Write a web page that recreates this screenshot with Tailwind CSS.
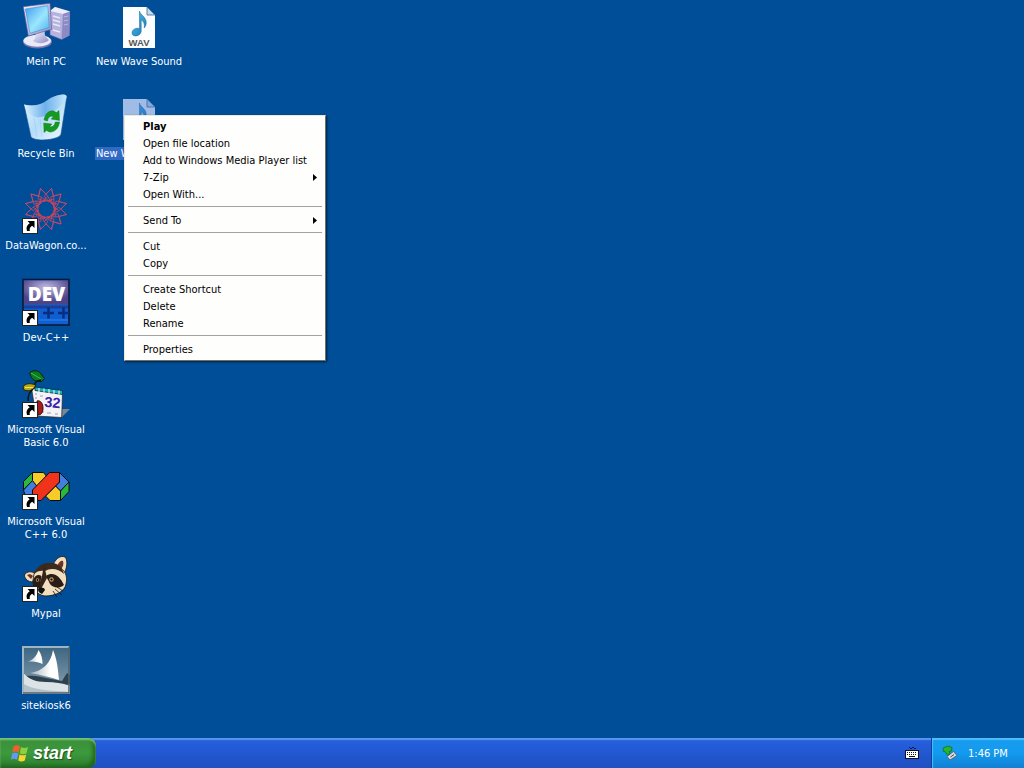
<!DOCTYPE html>
<html lang="en">
<head>
<meta charset="utf-8">
<meta name="viewport" content="width=device-width, initial-scale=1">
<title>Desktop</title>
<script src="https://cdn.jsdelivr.net/npm/@tailwindcss/browser@4"></script>
</head>
<body class="relative flex h-screen flex-col overflow-hidden bg-[#004e98] font-['DejaVu_Sans_Condensed','Noto_Sans',sans-serif] text-[11px] leading-[13px]">

<svg class="absolute size-0" aria-hidden="true">
  <defs>
    <linearGradient id="screen" x1="0" y1="0" x2="1" y2="1"><stop offset="0" stop-color="#3f9cf0"/><stop offset=".55" stop-color="#9ce6fc"/><stop offset="1" stop-color="#4ab0f0"/></linearGradient>
    <linearGradient id="case" x1="0" y1="0" x2="1" y2="1"><stop offset="0" stop-color="#f4f4fc"/><stop offset="1" stop-color="#8c8cc4"/></linearGradient>
    <linearGradient id="bin" x1="0" y1="0" x2="1" y2="1"><stop offset="0" stop-color="#e4f6fe"/><stop offset=".5" stop-color="#b4dcf8"/><stop offset="1" stop-color="#f2fbff"/></linearGradient>
    <linearGradient id="rim" x1="0" y1="0" x2="1" y2="0"><stop offset="0" stop-color="#d8f2ff"/><stop offset=".5" stop-color="#6fb0ec"/><stop offset="1" stop-color="#c4e8fc"/></linearGradient>
    <radialGradient id="dev" cx=".5" cy=".3" r=".6"><stop offset="0" stop-color="#c4bce4"/><stop offset="1" stop-color="#4c4488"/></radialGradient>
    <linearGradient id="note" x1="0" y1="0" x2="1" y2="1"><stop offset="0" stop-color="#55c0ee"/><stop offset="1" stop-color="#1479b8"/></linearGradient>
    <linearGradient id="sea" x1="0" y1="0" x2="0" y2="1"><stop offset="0" stop-color="#3c6480"/><stop offset="1" stop-color="#8ca4b4"/></linearGradient>
    <linearGradient id="sail" x1="0" y1="0" x2="1" y2="0"><stop offset="0" stop-color="#aab4bc"/><stop offset=".7" stop-color="#ffffff"/></linearGradient>
    <symbol id="shortcut" viewBox="0 0 16 16">
      <rect x=".5" y=".5" width="15" height="15" fill="#fff" stroke="#222"/>
      <path d="M5.500 3h7v7l-2.300-2.300C8 9 7.300 10.500 7.800 13H5C3.800 9.500 5 7 7.700 5.300z" fill="#000"/>
    </symbol>
    <symbol id="wav" viewBox="0 0 48 48">
      <path d="M8 5h24l8 8v33H8z" fill="#fcfeff"/>
      <path d="M32 5v8h8z" fill="#c4dcec" stroke="#3c6890" stroke-width=".8"/>
      <path d="M24.500 9c.8 4.500 7.300 5.500 6.700 12.500-.2 2-1.200 3.500-2 4.500.8-4-.6-7-3-8v11c0 5.300-9.200 7-9.200 2 0-3.600 4-5.400 7.500-4.500z" fill="url(#note)" stroke="#17648f" stroke-width=".5"/>
      <text x="24" y="44" text-anchor="middle" font-family="Liberation Sans" font-weight="bold" font-size="9.500" fill="#555">WAV</text>
    </symbol>
  </defs>
</svg>

<main class="flex min-h-0 flex-1 items-start gap-px">
  <section class="flex w-[92px] flex-col text-white" aria-label="Programs">
    <button class="flex h-[92px] flex-col items-center gap-[5px] pt-0.5">
      <svg class="size-12 shrink-0" viewBox="0 0 48 48">
        <path d="M28 9l5-4 15 4.500-.7 24-7.800 4L28 33z" fill="#b6b4de" stroke="#5357a2" stroke-width=".6"/>
        <path d="M28 9l5-4 15 4.500-7 2.500z" fill="#ececfb"/>
        <path d="M41 12l7-2.500-.7 24-7.800 4z" fill="#8b8ac4"/>
        <path d="M31 14l7 2M31 18l7 2M31 22l7 2M31 28l7 2" stroke="#e8e8fa" stroke-width="1.500"/>
        <path d="M42 15l4-1M42 19l4-1M42 23l4-1" stroke="#bbb9e2"/>
        <ellipse cx="15.500" cy="39.800" rx="14.500" ry="6.700" fill="#7675ae"/>
        <ellipse cx="15.200" cy="38.800" rx="13.800" ry="6" fill="#e9e9f7"/>
        <path d="M13 31l10-2c-1 4 1 6 4 9-4 4-12 4-16 1 3-3 3-5 2-8z" fill="url(#case)"/>
        <path d="M1.300 4.700L28 1.300l1.700 26L6.300 34z" fill="url(#case)" stroke="#55579c" stroke-width=".6"/>
        <path d="M3.300 7l22.500-3.300 1.500 21.700L8 31.300z" fill="url(#screen)" stroke="#3d7fc4" stroke-width=".5"/>
      </svg>
      <span class="px-px">Mein PC</span>
    </button>
    <button class="flex h-[92px] flex-col items-center gap-[5px] pt-0.5">
      <svg class="size-12 shrink-0" viewBox="0 0 48 48">
        <path d="M2 10.500C8 12 16 12 22 8.500 28 4 34 1 41.500.5c2 0 3.500 1 3.200 3L39 40c-.8 5.500-25 8.500-30 3z" fill="url(#bin)" stroke="#16548f" stroke-width=".6"/>
        <path d="M2 10.500C8 12 16 12 22 8.500 28 4 34 1 41.500.5c2 0 3.500 1 3 3C42 9 36 15 29 19c-7 4-14 6-18 3-4-2-7-6-8-9z" fill="url(#rim)"/>
        <path d="M12 24l3 19M18 25l2 18" stroke="#8fc6f0" opacity=".4"/>
        <g fill="#149b1f" stroke="#087010" stroke-width=".4">
          <path d="M22 26c1-6 5-10 9.500-9l3 1.500 2.500-2 .5 10-8.500-1.500 2.500-2.300c-4-1.700-5.500 1.300-6 4.300z"/>
          <path d="M37.500 28c-.5 6-5 10.500-10 10l-3-1.500-2.500 2-.3-9.500 8.300 1-2.300 2.500c3.500 1 5-1.500 5.600-4.500z"/>
        </g>
      </svg>
      <span class="px-px">Recycle Bin</span>
    </button>
    <button class="flex h-[92px] flex-col items-center gap-[5px] pt-0.5">
      <svg class="size-12 shrink-0" viewBox="0 0 48 48">
        <g fill="none" stroke="#c2486a" stroke-width=".8" transform="translate(24 23)">
          <path id="dwSpoke" d="M-5.500-20.500L0-15l5.500-5.500L8-10 0-8l-8-2zM-5-12L3-7"/>
          <use href="#dwSpoke" transform="rotate(30)"/>
          <use href="#dwSpoke" transform="rotate(60)"/>
          <use href="#dwSpoke" transform="rotate(90)"/>
          <use href="#dwSpoke" transform="rotate(120)"/>
          <use href="#dwSpoke" transform="rotate(150)"/>
          <use href="#dwSpoke" transform="rotate(180)"/>
          <use href="#dwSpoke" transform="rotate(210)"/>
          <use href="#dwSpoke" transform="rotate(240)"/>
          <use href="#dwSpoke" transform="rotate(270)"/>
          <use href="#dwSpoke" transform="rotate(300)"/>
          <use href="#dwSpoke" transform="rotate(330)"/>
        </g>
        <circle cx="24" cy="23" r="9" fill="none" stroke="#dc3c44" stroke-width="2" stroke-dasharray="2 3"/>
        <use href="#shortcut" x="0" y="32" width="16" height="16"/>
      </svg>
      <span class="px-px">DataWagon.co...</span>
    </button>
    <button class="flex h-[92px] flex-col items-center gap-[5px] pt-0.5">
      <svg class="size-12 shrink-0" viewBox="0 0 48 48">
        <rect x="1" y="1.500" width="46" height="45.500" fill="#0f5fd0" stroke="#101838" stroke-width="1.600"/>
        <rect x="2" y="2.500" width="44" height="24" fill="url(#dev)"/>
        <path d="M2 29h44" stroke="#1c3f98" stroke-width="3"/>
        <text x="24.500" y="22.500" text-anchor="middle" font-family="Open Sans" font-weight="800" font-size="19" fill="#fff">DEV</text>
        <path d="M21 35h11M26.500 29.500v11M36 35h11M41.500 29.500v11" stroke="#0a2d80" stroke-width="2.500"/>
        <path d="M17 42h29" stroke="#2a86f0"/>
        <use href="#shortcut" x="0" y="32" width="16" height="16"/>
      </svg>
      <span class="px-px">Dev-C++</span>
    </button>
    <button class="flex h-[92px] flex-col items-center gap-[5px] pt-0.5">
      <svg class="size-12 shrink-0" viewBox="0 0 48 48">
        <path d="M40 39h8l-8 8z" fill="#7c868c"/>
        <path d="M9.500 18l31 4.500-.8 25L14 46z" fill="#f4f4f8" stroke="#222" stroke-width=".7"/>
        <path d="M13 17l27.500 3.500v4L13 20.500z" fill="#18b4bc" stroke="#052c3c" stroke-width=".8"/>
        <path d="M17 18v4M22 18.500v4M27 19v4M32 20v4M37 20.500v4" stroke="#fff"/>
        <path d="M13 28h2M18 26h3M19 42h3M25 43h4M33 44h3M13 24h2" stroke="#b8bcc8" stroke-width="1.500"/>
        <text x="30.500" y="37.500" text-anchor="middle" font-family="Liberation Sans" font-weight="bold" font-size="14.500" fill="#3c20a8" transform="rotate(5 30 33)">32</text>
        <path d="M7.500 3C11-.5 17 0 19.500 4.500l3 4-3 3c-4 .5-9-1-10.500-5z" fill="#0d7a24" stroke="#082408"/>
        <path d="M9 3l10 6" stroke="#40c048"/>
        <path d="M19 10c-5 1-7 3-6 6" fill="none" stroke="#111" stroke-width="1.500"/>
        <path d="M1 17c2-4 8-4 12.500-2-1 5-6 7-11.500 5z" fill="#b4a41c" stroke="#252400"/>
        <path d="M3 17.500h8" stroke="#f0e660"/>
        <path d="M11 19c-3 3-5 5-5 12" fill="none" stroke="#111" stroke-width="1.500"/>
        <path d="M15 31c3-1 6 2 6 7s-2 7-5 7z" fill="#a41c20" stroke="#3c0808"/>
        <use href="#shortcut" x="0" y="32" width="16" height="16"/>
      </svg>
      <span class="px-px">Microsoft Visual<br>Basic 6.0</span>
    </button>
    <button class="flex h-[92px] flex-col items-center gap-[5px] pt-0.5">
      <svg class="size-12 shrink-0" viewBox="0 0 48 48">
        <g stroke="#0a0c18" stroke-width="1" stroke-linejoin="round">
          <path d="M1.500 19.500l9-9v8l-9 9.500z" fill="#2cb83a"/>
          <path d="M1.500 28l9-9.500 6 6.500-6 8H3z" fill="#3e7fe0"/>
          <path d="M10.500 10.500h11l4 5-10 9.500-5-6.500z" fill="#f8cc28"/>
          <path d="M37.500 10.500l9.500 9.500-8.500 9-5-5 4-4z" fill="#3e7fe0"/>
          <path d="M47 20v9.500L38.500 38.500V29z" fill="#2cb83a"/>
          <path d="M33.500 24l5 5v9.500H28L23.500 34z" fill="#f8cc28"/>
          <path d="M27.500 10.500h10V20L19 38.500h-8.500V28z" fill="#f0341c"/>
        </g>
        <use href="#shortcut" x="0" y="32" width="16" height="16"/>
      </svg>
      <span class="px-px">Microsoft Visual<br>C++ 6.0</span>
    </button>
    <button class="flex h-[92px] flex-col items-center gap-[5px] pt-0.5">
      <svg class="size-12 shrink-0" viewBox="0 0 48 48">
        <g stroke="#20140c" stroke-width=".8">
          <path d="M30 13C33 5 38 1 43 3c3 3 2 12-1 16z" fill="#f1dfc0"/>
          <path d="M2.500 21c2-4 8-4 11-1l-3 8c-4 0-8-3-8-7z" fill="#f1dfc0"/>
          <path d="M12 20C16 10 28 7 36 12c7 4 10 10 8 18-1 7-10 12-21 12C14 41 9 33 12 20z" fill="#f1dfc0"/>
        </g>
        <path d="M35 12c2-4 4-6 6-5 1 3 0 6-2 8zM5 21c2-1 4-1 6 1l-2 3z" fill="#6e3424"/>
        <path d="M12 20C15 9 29 6 36 11c3 2 5 5 6 9-6-6-14-6-19-3-4-1-8 0-11 3z" fill="#3c2a1c"/>
        <path d="M22 11l3 13-6 11-3-1 4-12z" fill="#34241a"/>
        <path d="M11.500 25c2-4 5-5 8-3l-2 11-4 3c-3-3-3-7-2-11zM24 22c7-5 14 0 18 9-5 4-11 3-14-1-1-3-3-5-4-8z" fill="#2a1d16"/>
        <circle cx="15.500" cy="26" r="1.800" fill="#c4a064"/><circle cx="29.500" cy="25.500" r="2.200" fill="#c4a064"/>
        <circle cx="15.500" cy="26" r=".9"/><circle cx="29.500" cy="25.500" r="1.100"/>
        <path d="M16 35c2-2 6-2 7 1l-3 4c-3-1-4-3-4-5z" fill="#111"/>
        <path d="M33 35l7 6M35 33l6 4M31 37l4 6" stroke="#111" stroke-width=".8"/>
        <use href="#shortcut" x="0" y="32" width="16" height="16"/>
      </svg>
      <span class="px-px">Mypal</span>
    </button>
    <button class="flex h-[92px] flex-col items-center gap-[5px] pt-0.5">
      <svg class="size-12 shrink-0" viewBox="0 0 48 48">
        <rect width="48" height="48" fill="url(#sea)"/>
        <path d="M4 30c8-1 14 1 20 2l16 3 5-8 3 2v9c-14 4-34 3-44-8z" fill="#2c404e"/>
        <path d="M0 25c5 8 14 11 24 11 9 0 16 1 24 4v8H0z" fill="#dce3e7"/>
        <path d="M0 37c12 8 28 7 48 9v2H0z" fill="#b4c0c8"/>
        <path d="M16.500 4c3 4 4 9 4 14-4-2-10-3-16-2 7-2 10-6 12-12z" fill="url(#sail)"/>
        <path d="M31 4c4 9 5 19 6 30-8-3-18-5-29-7 13-2 21-10 23-23z" fill="url(#sail)"/>
        <path d="M1 48V1h46" fill="none" stroke="#9eb6c2" stroke-width="2"/>
        <path d="M47 1v46H1" fill="none" stroke="#53616b" stroke-width="1.500"/>
      </svg>
      <span class="px-px">sitekiosk6</span>
    </button>
  </section>

  <section class="flex w-[92px] flex-col text-white" aria-label="Sounds">
    <button class="flex h-[92px] flex-col items-center gap-[5px] pt-0.5 whitespace-nowrap">
      <svg class="size-12 shrink-0" viewBox="0 0 48 48"><use href="#wav"/></svg>
      <span class="px-px">New Wave Sound</span>
    </button>
    <button class="flex h-[92px] flex-col items-center gap-[5px] pt-0.5 whitespace-nowrap">
      <svg class="size-12 shrink-0" viewBox="0 0 48 48"><use href="#wav"/><path d="M8 5h24l8 8v33H8z" fill="#316ac5" opacity=".45"/></svg>
      <span class="bg-[#316ac5] px-px">New Wave Sound</span>
    </button>
  </section>
</main>

<div role="menu" class="absolute top-[115px] left-[124px] flex w-[202px] flex-col border border-t-[#ece9d8] border-r-[#716f64] border-b-[#716f64] border-l-[#ece9d8] bg-[#fefefc] p-0.5 text-black shadow-[1px_1px_2px_rgba(0,0,0,0.6)]">
  <button role="menuitem" class="h-[17px] px-4 text-left font-bold">Play</button>
  <button role="menuitem" class="h-[17px] px-4 text-left">Open file location</button>
  <button role="menuitem" class="h-[17px] px-4 text-left whitespace-nowrap">Add to Windows Media Player list</button>
  <button role="menuitem" class="flex h-[17px] items-center justify-between pr-1.5 pl-4">7-Zip<svg class="h-[7px] w-1" viewBox="0 0 4 7"><path d="M0 0l4 3.500L0 7z"/></svg></button>
  <button role="menuitem" class="h-[17px] px-4 text-left">Open With...</button>
  <hr class="mx-px mt-[3px] mb-[5px] border-[#a3a3a0]">
  <button role="menuitem" class="flex h-[17px] items-center justify-between pr-1.5 pl-4">Send To<svg class="h-[7px] w-1" viewBox="0 0 4 7"><path d="M0 0l4 3.500L0 7z"/></svg></button>
  <hr class="mx-px mt-[3px] mb-[5px] border-[#a3a3a0]">
  <button role="menuitem" class="h-[17px] px-4 text-left">Cut</button>
  <button role="menuitem" class="h-[17px] px-4 text-left">Copy</button>
  <hr class="mx-px mt-[3px] mb-[5px] border-[#a3a3a0]">
  <button role="menuitem" class="h-[17px] px-4 text-left">Create Shortcut</button>
  <button role="menuitem" class="h-[17px] px-4 text-left">Delete</button>
  <button role="menuitem" class="h-[17px] px-4 text-left">Rename</button>
  <hr class="mx-px mt-[3px] mb-[5px] border-[#a3a3a0]">
  <button role="menuitem" class="h-[17px] px-4 text-left">Properties</button>
</div>

<footer class="flex h-[30px] shrink-0 items-stretch bg-linear-to-b from-[#2e62d8] via-[#245ddb] via-20% to-[#1f4fc0] shadow-[inset_0_2px_1px_#5a94f4]">
  <button class="flex w-24 items-center gap-1 rounded-r-lg bg-linear-to-b from-[#3a8e3a] via-[#3c9a3c] to-[#2c7c2c] pl-[11px] shadow-[inset_0_2px_2px_#7cc47c,inset_-3px_-2px_4px_#1d611d]">
    <svg class="size-[18px]" viewBox="0 0 18 18">
      <path d="M2.500 2.500C5 .8 7 1 9 2.300L7.700 8.500C5.500 7.300 3.500 7.300 1.300 8.500z" fill="#f0602c"/>
      <path d="M10 3c2.500 1.300 4.500 1.300 7 0l-1.500 6.300c-2.300 1.200-4.500 1.200-6.700 0z" fill="#8cd042"/>
      <path d="M1 9.700c2.200-1.400 4.300-1.300 6.400-.2L6 15.700c-2.200-1.400-4.200-1.300-6 0z" fill="#6498f4"/>
      <path d="M8.600 10.400c2.200 1.200 4.300 1.100 6.600 0l-1.400 6c-2.400 1.400-4.400 1.300-6.600 0z" fill="#fcd430"/>
    </svg>
    <span class="font-['Liberation_Sans',sans-serif] text-[18px] leading-5 font-bold text-white italic text-shadow-[1px_1px_1px_#1d501d]">start</span>
  </button>
  <div class="flex flex-1 items-center justify-end pr-3">
    <button aria-label="Keyboard layout">
      <svg class="size-[14px]" viewBox="0 0 14 14">
        <path d="M4 1l2 2 2-2 2 2 1-1" fill="none" stroke="#101840"/>
        <rect x=".5" y="4.500" width="13" height="8" fill="#fff" stroke="#101020"/>
        <path d="M2 6.500h10M2 8.500h10" stroke="#101020" stroke-dasharray="1 1"/><path d="M4 10.500h6" stroke="#101020"/>
      </svg>
    </button>
  </div>
  <div class="flex w-[93px] items-center gap-2.5 border-l border-[#0f3f9c] bg-linear-to-b from-[#1a9cf0] via-[#129aee] to-[#1180d4] pl-2.5 text-white shadow-[inset_1px_2px_1px_#4cc0fc]">
    <button aria-label="Safely remove hardware">
      <svg class="size-4" viewBox="0 0 16 16">
        <path d="M5 11.500l6.500-5 3.500 4-7 4.500z" fill="#d8dce0" stroke="#404850" stroke-width=".7"/>
        <path d="M8.500 12l3.500-2.500" stroke="#404850"/>
        <path d="M1 3l5-2 4 1.500-.5 3.500-2.500.5 1 2.500-2.500 1L3 6.500l-1.500 0z" fill="#27b52e" stroke="#0b6a1a" stroke-width=".7"/>
      </svg>
    </button>
    <time class="whitespace-nowrap">1:46 PM</time>
  </div>
</footer>
</body>
</html>
